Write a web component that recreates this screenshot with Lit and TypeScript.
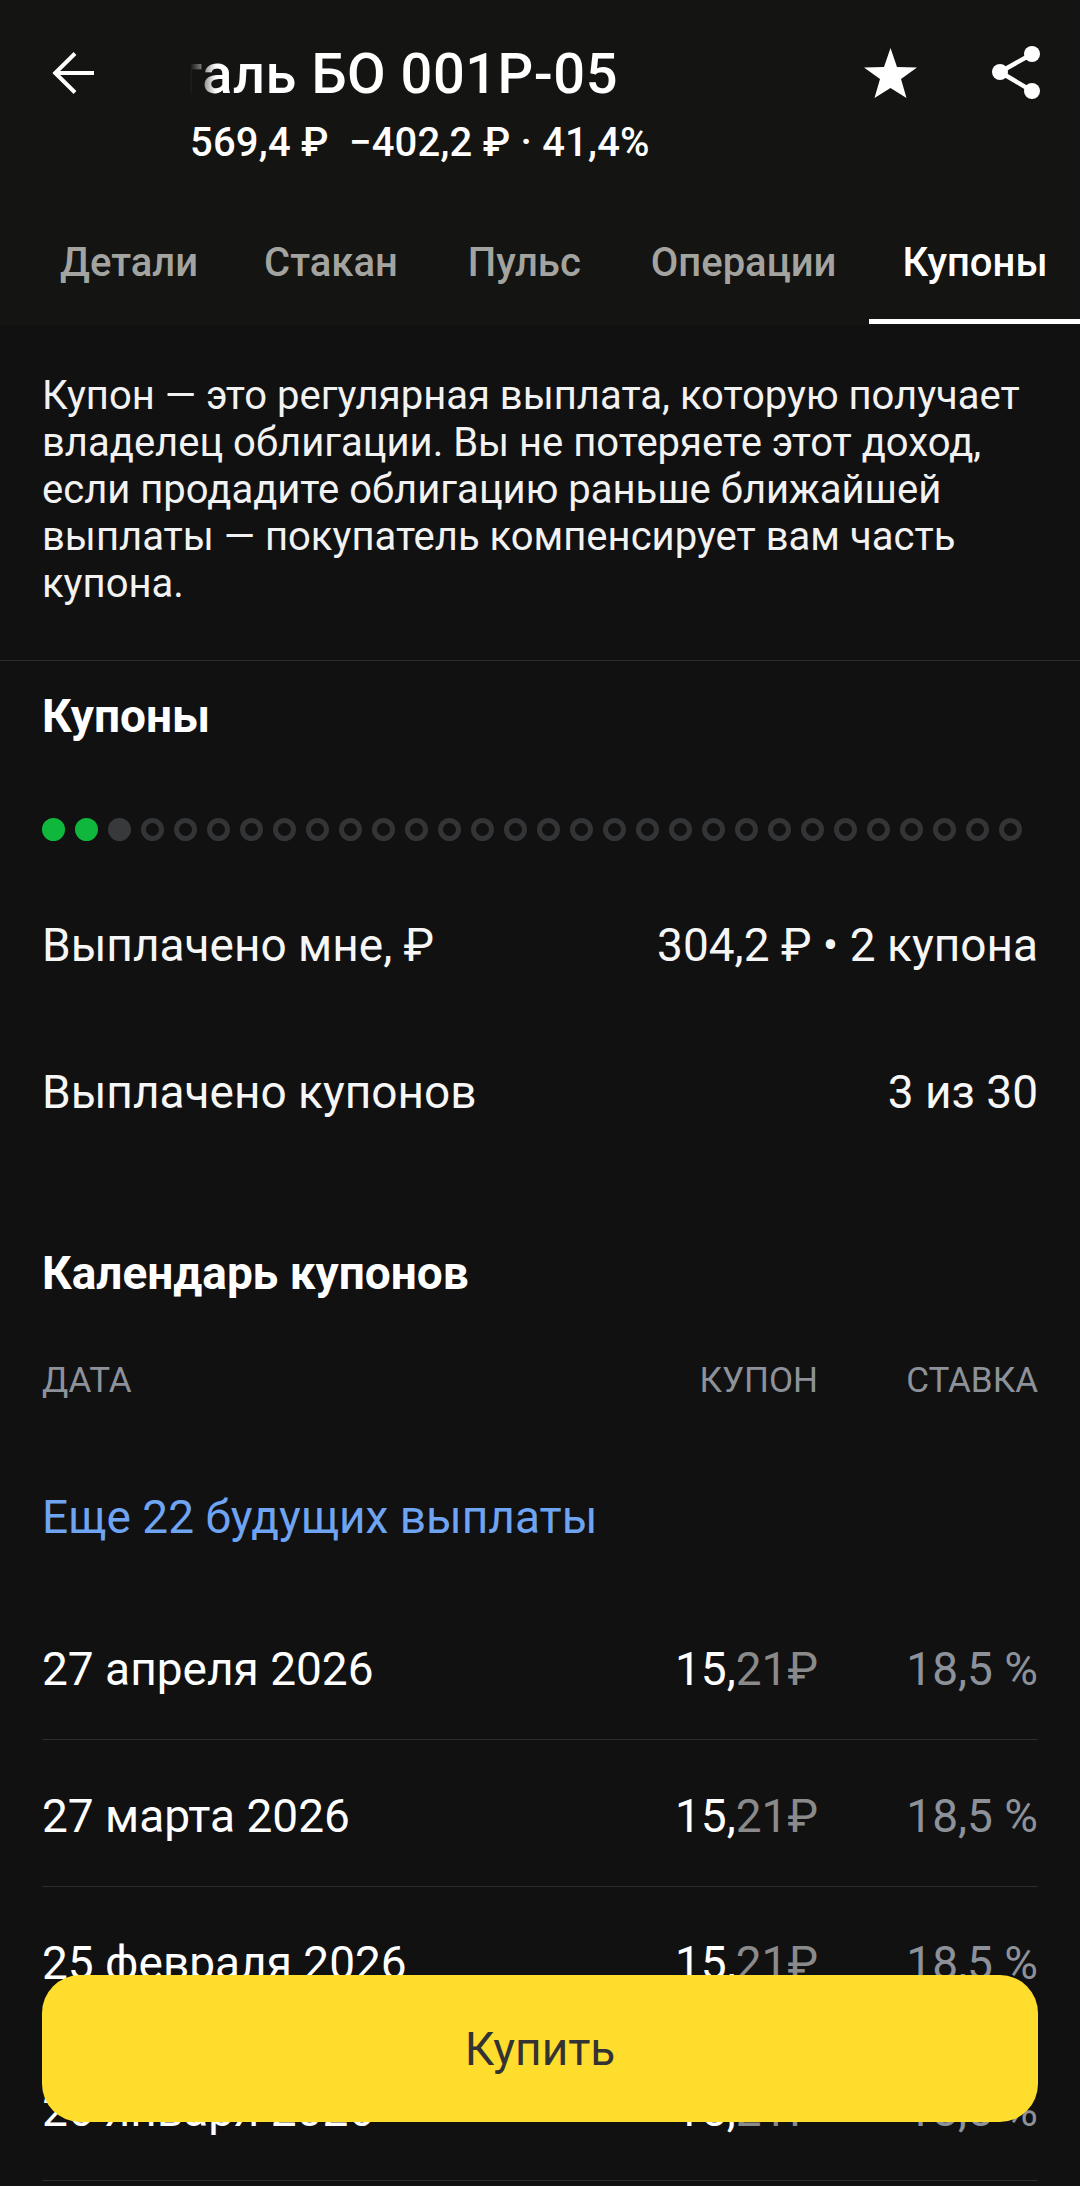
import { LitElement, html, css } from "lit";
import { customElement } from "lit/decorators.js";

const rows = [
  ["27 апреля 2026"],
  ["27 марта 2026"],
  ["25 февраля 2026"],
  ["26 января 2026"],
];

@customElement("app-root")
export class AppRoot extends LitElement {
  static styles = css`
    :host {
      display: block;
      position: relative;
      width: 1080px;
      height: 2186px;
      overflow: hidden;
      background: #111112;
      color: #fff;
      font-family: Roboto, "Noto Sans", sans-serif;
    }
    .top { background: #141412; height: 325px; }
    .head { display: flex; height: 164px; align-items: flex-start; }
    .back { width: 190px; flex: none; padding: 52px 0 0 52px; box-sizing: border-box; }
    .back svg, .star svg, .share svg { display: block; }
    .titles { width: 640px; flex: none; overflow: hidden; padding-top: 46px; }
    .title {
      width: 428px; display: flex; justify-content: flex-end; overflow: hidden; white-space: nowrap;
      font-size: 56px; line-height: 56px; font-weight: 500; height: 58px; letter-spacing: 0.5px;
      -webkit-mask-image: linear-gradient(90deg, transparent 0, #000 26px);
      mask-image: linear-gradient(90deg, transparent 0, #000 26px);
    }
    .sub { font-size: 40px; line-height: 46px; font-weight: 500; margin-top: 16px; white-space: pre; letter-spacing: 0.2px; }
    .star { margin-left: 34px; padding-top: 48px; }
    .share { margin-left: 75px; padding-top: 46px; }
    .tabs { display: flex; padding-left: 27px; height: 161px; box-sizing: border-box; padding-top: 72px; }
    .tab {
      padding: 0 33px; font-size: 40px; font-weight: 500; line-height: 54px; color: #a3a4a0; white-space: nowrap; height: 88px; box-sizing: border-box;
    }
    .tab.wide { margin-left: 4px; }
    .tab.on { color: #fff; border-bottom: 5px solid #fff; flex: 1; }
    .intro {
      padding: 47px 42px 0; height: 336px; box-sizing: border-box; border-bottom: 1px solid #2c2d2e;
      font-size: 40px; line-height: 47px; color: #f2f2f2;
    }
    .h { font-size: 46px; line-height: 50px; font-weight: 700; padding: 0 42px; }
    .h1 { padding-top: 30px; }
    .dots { display: flex; gap: 10px; padding: 0 42px; margin-top: 77px; }
    .dot { width: 23px; height: 23px; border-radius: 50%; box-sizing: border-box; border: 5px solid #333436; }
    .dot.g { background: #0fb83c; border-color: #0fb83c; }
    .dot.c { background: #38393b; border-color: #38393b; }
    .info { display: flex; justify-content: space-between; padding: 0 42px; font-size: 46px; line-height: 50px; color: #f6f6f6; }
    .i1 { margin-top: 79px; }
    .i2 { margin-top: 97px; }
    .h2 { margin-top: 131px; }
    .grid { display: grid; grid-template-columns: 1fr 200px 220px; margin: 0 42px; }
    .thead { font-size: 35px; line-height: 40px; color: #8d9199; margin-top: 63px; }
    .r { text-align: right; }
    .more { padding: 0 42px; margin-top: 91px; font-size: 46px; line-height: 50px; color: #6ea4f2; }
    .row { height: 147px; box-sizing: border-box; border-bottom: 1px solid #2c2d2e; font-size: 46px; line-height: 50px; align-items: center; padding-top: 5px; }
    .list { margin-top: 51px; }
    .row .a i { font-style: normal; color: #8a8a8a; }
    .row .p { color: #8d9199; }
    .buy {
      position: absolute; left: 42px; top: 1975px; width: 996px; height: 147px; border-radius: 38px; background: #ffdd2d;
      display: flex; align-items: center; justify-content: center; font-size: 46px; color: #333;
    }
  `;

  render() {
    const dots = Array.from({ length: 30 }, (_, i) => (i < 2 ? "g" : i === 2 ? "c" : ""));
    return html`
      <div class="top">
        <div class="head">
          <div class="back">
            <svg width="44" height="42" viewBox="0 0 44 42" fill="none" stroke="#fff" stroke-width="4">
              <path d="M42 21H3.5M23 1.5 3.2 21 23 40.5"/>
            </svg>
          </div>
          <div class="titles">
            <div class="title"><span>Уральская Сталь БО 001Р-05</span></div>
            <div class="sub">569,4 ₽  −402,2 ₽ · 41,4%</div>
          </div>
          <div class="star">
            <svg width="53" height="50" viewBox="0 0 53 50"><path fill="#fff" d="M26.5 0 33 19l20 .5L37 31l5.5 19-16-10-16 10L16 31 0 19.5 20 19z"/></svg>
          </div>
          <div class="share">
            <svg width="48" height="53" viewBox="0 0 48 53">
              <path d="M40 8 8 26l32 19" fill="none" stroke="#fff" stroke-width="4.5"/>
              <circle cx="40" cy="8" r="8" fill="#fff"/><circle cx="8" cy="26" r="8" fill="#fff"/><circle cx="40" cy="45" r="8" fill="#fff"/>
            </svg>
          </div>
        </div>
        <div class="tabs">
          <div class="tab">Детали</div><div class="tab">Стакан</div><div class="tab wide">Пульс</div><div class="tab wide">Операции</div><div class="tab on">Купоны</div>
        </div>
      </div>
      <div class="intro">Купон — это регулярная выплата, которую получает владелец облигации. Вы не потеряете этот доход, если продадите облигацию раньше ближайшей выплаты — покупатель компенсирует вам часть купона.</div>
      <div class="h h1">Купоны</div>
      <div class="dots">${dots.map((d) => html`<div class="dot ${d}"></div>`)}</div>
      <div class="info i1"><span>Выплачено мне, ₽</span><span>304,2 ₽ • 2 купона</span></div>
      <div class="info i2"><span>Выплачено купонов</span><span>3 из 30</span></div>
      <div class="h h2">Календарь купонов</div>
      <div class="grid thead"><span>ДАТА</span><span class="r">КУПОН</span><span class="r">СТАВКА</span></div>
      <div class="more">Еще 22 будущих выплаты</div>
      <div class="list">
        ${rows.map(([d]) => html`<div class="grid row"><span>${d}</span><span class="r a">15,<i>21₽</i></span><span class="r p">18,5 %</span></div>`)}
      </div>
      <div class="buy">Купить</div>
    `;
  }
}
